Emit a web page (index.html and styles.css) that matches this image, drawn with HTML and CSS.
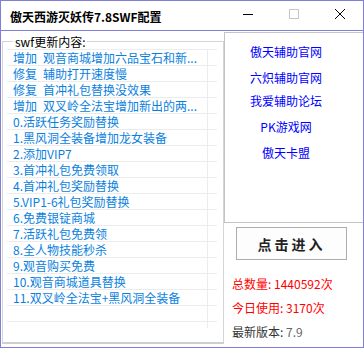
FILE: index.html
```html
<!DOCTYPE html>
<html lang="zh-CN">
<head>
    <meta charset="UTF-8">
    <title>傲天西游灭妖传7.8SWF配置</title>
    <link rel="stylesheet" href="styles.css">
</head>
<body>
    <div class="window">
        <div class="titlebar">
            <div class="title">傲天西游灭妖传7.8SWF配置</div>
            <div class="controls">
                <span class="ctl"><svg width="10" height="10" viewBox="0 0 10 10"><path d="M0 5.5h10" stroke="#000" stroke-width="1"/></svg></span>
                <span class="ctl"><svg width="10" height="10" viewBox="0 0 10 10"><rect x="0.5" y="0.5" width="9" height="9" fill="none" stroke="#c6c6c6" stroke-width="1"/></svg></span>
                <span class="ctl"><svg width="10" height="10" viewBox="0 0 10 10"><path d="M0 0L10 10M10 0L0 10" stroke="#000" stroke-width="1"/></svg></span>
            </div>
        </div>

        <div class="client">
            <fieldset class="updates">
                <legend>swf更新内容:</legend>
                <div class="list">
                    <div class="row"><span class="cell">增加&ensp;观音商城增加六品宝石和新...</span><span class="cell-end"></span></div>
                    <div class="row"><span class="cell">修复&ensp;辅助打开速度慢</span><span class="cell-end"></span></div>
                    <div class="row"><span class="cell">修复&ensp;首冲礼包替换没效果</span><span class="cell-end"></span></div>
                    <div class="row"><span class="cell">增加&ensp;双叉岭全法宝增加新出的两...</span><span class="cell-end"></span></div>
                    <div class="row"><span class="cell">0.活跃任务奖励替换</span><span class="cell-end"></span></div>
                    <div class="row"><span class="cell">1.黑风洞全装备增加龙女装备</span><span class="cell-end"></span></div>
                    <div class="row"><span class="cell">2.添加VIP7</span><span class="cell-end"></span></div>
                    <div class="row"><span class="cell">3.首冲礼包免费领取</span><span class="cell-end"></span></div>
                    <div class="row"><span class="cell">4.首冲礼包奖励替换</span><span class="cell-end"></span></div>
                    <div class="row"><span class="cell">5.VIP1-6礼包奖励替换</span><span class="cell-end"></span></div>
                    <div class="row"><span class="cell">6.免费银锭商城</span><span class="cell-end"></span></div>
                    <div class="row"><span class="cell">7.活跃礼包免费领</span><span class="cell-end"></span></div>
                    <div class="row"><span class="cell">8.全人物技能秒杀</span><span class="cell-end"></span></div>
                    <div class="row"><span class="cell">9.观音购买免费</span><span class="cell-end"></span></div>
                    <div class="row"><span class="cell">10.观音商城道具替换</span><span class="cell-end"></span></div>
                    <div class="row"><span class="cell">11.双叉岭全法宝+黑风洞全装备</span><span class="cell-end"></span></div>
                    <div class="row"><span class="cell"></span><span class="cell-end"></span></div>
                    <div class="row"><span class="cell"></span><span class="cell-end"></span></div>
                </div>
            </fieldset>

            <div class="side">
                <div class="links">
                    <a href="#">傲天辅助官网</a>
                    <a href="#">六炽辅助官网</a>
                    <a href="#" class="nudge">我爱辅助论坛</a>
                    <a href="#">PK游戏网</a>
                    <a href="#">傲天卡盟</a>
                </div>
                <button class="enter">点击进入</button>
                <div class="stats">
                    <p class="red">总数量: 1440592次</p>
                    <p class="red shift">今日使用: 3170次</p>
                    <p class="ver">最新版本: <span class="num">7.9</span></p>
                </div>
            </div>
        </div>
    </div>
</body>
</html>
```

FILE: styles.css
```css
* {
    box-sizing: border-box;
}
body {
    margin: 0;
    background-color: #fff;
    font-family: "Noto Sans CJK SC", "Noto Sans", sans-serif;
    font-size: 12px;
}
.window {
    width: 364px;
    height: 348px;
    border: 1px solid #7f7fd8;
    background-color: #fff;
}
.titlebar {
    display: flex;
    height: 30px;
    border-bottom: 1px solid #7f7fd8;
}
.title {
    padding-left: 9px;
    margin-top: 8px;
    font-size: 12px;
    font-weight: bold;
    line-height: 15px;
    color: #000;
}
.controls {
    display: flex;
    margin-left: auto;
}
.ctl {
    display: flex;
    width: 46px;
    height: 25px;
    align-items: center;
    justify-content: center;
}
.client {
    display: flex;
    height: 316px;
}
.updates {
    width: 222px;
    height: 310px;
    margin: 3px 0 0 1px;
    padding: 0;
    min-width: 0;
    border: 1px solid #d5d5d5;
    border-bottom: 2px solid #cfcfcf;
}
.updates legend {
    margin-left: 10px;
    padding: 0 2px;
    line-height: 15px;
    color: #000;
}
.list {
    width: 210px;
    height: 279px;
    margin-left: 4px;
    overflow: hidden;
}
.row {
    display: flex;
    height: 16px;
    border-top: 1px solid #ececec;
}
.cell {
    width: 201px;
    padding-left: 6px;
    border-right: 1px solid #ececec;
    line-height: 15px;
    color: #0a7fe0;
    white-space: nowrap;
    overflow: hidden;
}
.cell-end {
    flex: 1;
}
.side {
    flex: 1;
}
.links {
    display: flex;
    flex-direction: column;
    gap: 10px;
    height: 191px;
    margin-top: 1px;
    padding: 11px 16px 0 0;
    border: 1px solid #c4c4c4;
    border-right: none;
    text-align: center;
}
.links a {
    line-height: 16px;
    color: #0000ff;
    text-decoration: none;
}
.links .nudge {
    margin-top: -3px;
}
.enter {
    display: block;
    width: 111px;
    height: 33px;
    margin: 4px 0 0 12px;
    border: 1px solid #adadad;
    background-color: #fdfdfd;
    font-family: "Noto Sans CJK SC", sans-serif;
    font-size: 14px;
    font-weight: bold;
    letter-spacing: 3px;
    color: #222;
}
.stats {
    margin-top: 12px;
    padding-left: 8px;
}
.stats p {
    margin: 0;
    line-height: 24px;
}
.red {
    color: #ff0000;
}
.shift {
    margin-left: -4px;
}
.ver {
    color: #333;
}
.ver .num {
    color: #666;
}
```
